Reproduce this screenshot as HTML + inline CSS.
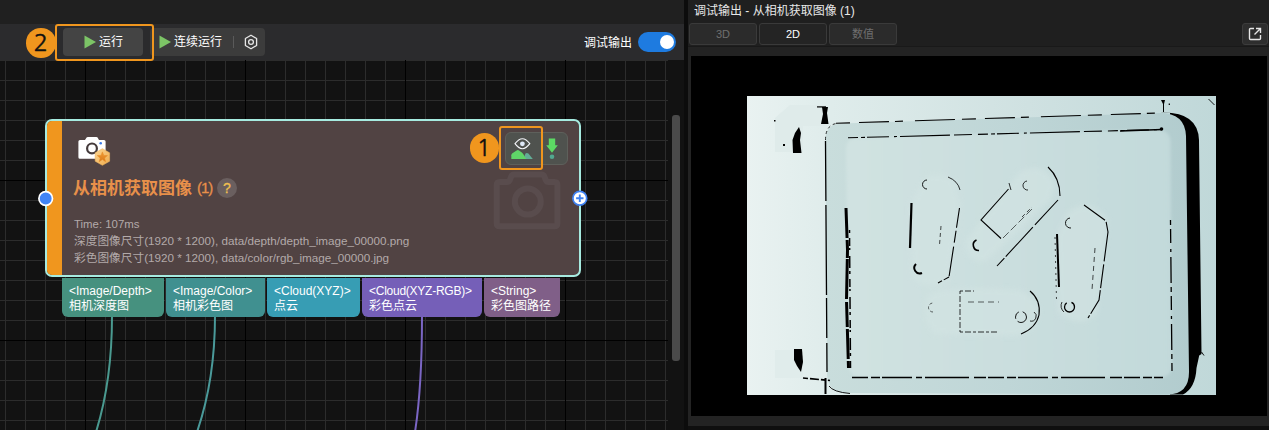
<!DOCTYPE html>
<html lang="zh-CN">
<head>
<meta charset="utf-8">
<title>调试输出</title>
<style>
*{box-sizing:border-box;margin:0;padding:0}
html,body{width:1269px;height:430px;overflow:hidden;background:#121212}
body{position:relative;font-family:"Liberation Sans","Noto Sans CJK SC",sans-serif;font-size:12px;color:#fff}
.abs{position:absolute}
#topstrip{left:0;top:0;width:684px;height:24px;background:#202020}
#toolbar{left:0;top:24px;width:684px;height:36px;background:#2b2b2d}
#canvas{left:0;top:60px;width:684px;height:370px;background:#121212;overflow:hidden}
#grid{left:0;top:0;width:668px;height:370px;
 background-image:
  linear-gradient(to right,#000 0,#000 1px,transparent 1px),
  linear-gradient(to bottom,#000 0,#000 1px,transparent 1px),
  linear-gradient(to right,#2c2c2c 0,#2c2c2c 1px,transparent 1px),
  linear-gradient(to bottom,#2c2c2c 0,#2c2c2c 1px,transparent 1px);
 background-size:160px 160px,160px 160px,20px 20px,20px 20px;
 background-position:85px 0,0 120px,5px 0,0 0;}
#vthumb{left:672px;top:55px;width:8px;height:246px;background:#4a4a4a;border-radius:3px}
#sep{left:684px;top:0;width:4px;height:430px;background:#0c0c0c}
#right{left:688px;top:0;width:581px;height:430px;background:linear-gradient(to bottom,#1f1f1f 0,#1f1f1f 46px,#191919 46px,#191919 47px,#232323 47px)}
#rbottom{left:688px;top:426px;width:581px;height:4px;background:#0f0f0f}
#view{left:691px;top:56px;width:576px;height:360px;background:#000}
.tab{top:23px;width:68px;height:22px;background:#2b2b2b;border:1px solid #3a3a3a;border-radius:3px;color:#6f6f6f;text-align:center;line-height:21px;font-size:11px}
.tab.on{background:#242424;color:#fff}
#title2{left:694px;top:3px;font-size:12px;line-height:17px;color:#e8e8e8;white-space:nowrap}
.btn{color:#fff;font-size:12px;white-space:nowrap}
#node{left:45px;top:119px;width:536px;height:158px;border:2px solid #a6ebe0;border-radius:7px;background:#514343;overflow:hidden}
#nodebar{left:0;top:0;width:15px;height:154px;background:#f0961e}
.port{top:278px;height:39px;border-radius:0 0 6px 6px;color:#fff;font-size:12px;line-height:15px;padding:5.5px 0 0 7px;white-space:nowrap}
.info{left:74px;color:#b3aaaa;font-size:11.7px;white-space:nowrap;line-height:14px}
.badge{width:29.5px;height:29.5px;border-radius:50%;background:#f0961e;color:#111;font-family:"NanumGothic",sans-serif;font-size:24px;-webkit-text-stroke:0.4px #111;line-height:29.5px;text-align:center}
.hl{border:2px solid #f0961e;border-radius:3px}
</style>
</head>
<body>
<div id="topstrip" class="abs"></div>
<div id="toolbar" class="abs"></div>
<div id="canvas" class="abs">
  <div id="grid" class="abs"></div>
  <div id="vthumb" class="abs"></div>
</div>

<!-- toolbar contents -->
<div class="abs" style="left:150px;top:28px;width:115px;height:28px;background:#3c3c3c;border-radius:4px"></div>
<div class="abs" style="left:63px;top:28px;width:80px;height:28px;background:#444444;border-radius:4px"></div>
<svg class="abs" style="left:83px;top:35px" width="14" height="14"><path d="M1.5 0.5 L13 7 L1.5 13.5 Z" fill="#7cc466"/></svg>
<div class="abs btn" style="left:99px;top:33px;line-height:18px">运行</div>
<svg class="abs" style="left:158px;top:35px" width="14" height="14"><path d="M1.5 0.5 L13 7 L1.5 13.5 Z" fill="#7cc466"/></svg>
<div class="abs btn" style="left:174px;top:33px;line-height:18px">连续运行</div>
<div class="abs" style="left:233px;top:36px;width:1px;height:12px;background:#5a5a5a"></div>
<svg class="abs" style="left:243px;top:34px" width="16" height="16" viewBox="0 0 16 16"><path d="M8 1.2 L13.6 4.5 V11.5 L8 14.8 L2.4 11.5 V4.5 Z" fill="none" stroke="#e6e6e6" stroke-width="1.3" stroke-linejoin="round"/><circle cx="8" cy="8" r="2.4" fill="none" stroke="#e6e6e6" stroke-width="1.3"/></svg>
<div class="abs hl" style="left:55px;top:24px;width:99px;height:37px"></div>
<div class="abs badge" style="left:26px;top:28px">2</div>

<div class="abs btn" style="left:584px;top:34px;line-height:18px;font-size:12px">调试输出</div>
<div class="abs" style="left:638px;top:32px;width:38px;height:20px;border-radius:10px;background:#1e7be0"></div>
<div class="abs" style="left:660px;top:35px;width:14px;height:14px;border-radius:50%;background:#fff"></div>

<!-- wires -->
<svg class="abs" style="left:0;top:300px" width="684" height="130" viewBox="0 300 684 130">
 <path d="M112 316 C112 360 106 400 96 432" fill="none" stroke="#4a9a90" stroke-width="2"/>
 <path d="M215 316 C215 360 208 400 197 432" fill="none" stroke="#4a9a9a" stroke-width="2"/>
 <path d="M422 316 C422 360 420 400 415 432" fill="none" stroke="#7b66c4" stroke-width="2"/>
</svg>

<!-- node -->
<div id="node" class="abs">
  <div id="nodebar" class="abs"></div>
</div>
<!-- watermark camera -->
<svg class="abs" style="left:490px;top:170px" width="76" height="64" viewBox="490 170 76 64">
 <path d="M499.700 182 H507 Q509 182 509.700 180.300 L511.300 176.300 Q512 174.600 514 174.600 H541.600 Q543.600 174.600 544.300 176.300 L545.900 180.300 Q546.600 182 548.600 182 H554.400 Q557.400 182 557.400 185 V223.200 Q557.400 226.200 554.400 226.200 H499.700 Q496.700 226.200 496.700 223.200 V185 Q496.700 182 499.700 182 Z" fill="none" stroke="#594c4d" stroke-width="6" stroke-linejoin="round"/>
 <circle cx="527.800" cy="201.600" r="13" fill="none" stroke="#594c4d" stroke-width="6"/>
</svg>
<!-- camera icon -->
<svg class="abs" style="left:76px;top:133px" width="38" height="36" viewBox="76 133 38 36">
 <defs><linearGradient id="hx" x1="0" y1="0" x2="1" y2="1"><stop offset="0" stop-color="#fcd692"/><stop offset="1" stop-color="#efaa4c"/></linearGradient>
 <linearGradient id="st" x1="0" y1="0" x2="0" y2="1"><stop offset="0" stop-color="#f09a34"/><stop offset="1" stop-color="#dc7a18"/></linearGradient></defs>
 <path d="M80 140 H85 L86.600 137.600 Q87 137 87.800 137 H96.400 Q97.200 137 97.600 137.600 L99 140 H104 Q105.600 140 105.600 141.600 V157.200 Q105.600 158.800 104 158.800 H80 Q78.400 158.800 78.400 157.200 V141.600 Q78.400 140 80 140 Z" fill="#fff"/>
 <circle cx="92" cy="148.400" r="4.900" fill="#fff" stroke="#453b3c" stroke-width="2.200"/>
 <circle cx="100.700" cy="143.300" r="1.300" fill="#3b7be8"/>
 <path d="M102.4 148.7 L109.6 152.8 L109.6 161.2 L102.4 165.3 L95.2 161.2 L95.2 152.8 Z" fill="url(#hx)" stroke="#eeb35c" stroke-width="0.600" stroke-linejoin="round"/>
 <path d="M102.4 151.9 L103.8 155.4 L107.5 155.6 L104.6 158.0 L105.6 161.7 L102.4 159.6 L99.2 161.7 L100.2 158.0 L97.3 155.6 L101.0 155.4 Z" fill="url(#st)" stroke="#e58a26" stroke-width="0.500" stroke-linejoin="round"/>
</svg>
<div class="abs" style="left:73px;top:177.5px;font-size:17px;font-weight:bold;color:#e8904a;line-height:22px;white-space:nowrap">从相机获取图像<span style="font-size:15px;margin-left:5px;font-weight:normal;letter-spacing:-1px;-webkit-text-stroke:0.3px #e8904a;position:relative;top:-0.5px">(1)</span></div>
<div class="abs" style="left:217px;top:178px;width:20px;height:20px;border-radius:50%;background:#6a5f5f;color:#f0c050;font-size:14px;-webkit-text-stroke:0.3px #f0c050;line-height:20px;text-align:center">?</div>
<div class="abs info" style="top:217px;font-size:11.4px">Time: 107ms</div>
<div class="abs info" style="top:234px">深度图像尺寸(1920 * 1200), data/depth/depth_image_00000.png</div>
<div class="abs info" style="top:251px">彩色图像尺寸(1920 * 1200), data/color/rgb_image_00000.jpg</div>

<!-- node icons -->
<div class="abs" style="left:505px;top:132px;width:63px;height:33px;border-radius:6px;background:#4f524e;border:1px solid #5e605b"></div>
<svg class="abs" style="left:508px;top:134px" width="28" height="28" viewBox="508 134 28 28">
 <path d="M523.5 159 L525.5 153.6 Q526.8 152.2 528.4 153.6 L532.8 159 Z" fill="#62ad96"/>
 <path d="M511.3 159 V155.2 Q511.3 154 512.4 153.2 L516.6 150.4 Q517.8 149.600 519 150.4 L521.8 152.4 Q522.6 153 523.2 154 L526.2 159 Z" fill="#5fd668"/>
 <path d="M515 143.7 Q522.4 133.700 529.8 143.7 Q522.4 153.700 515 143.7 Z" fill="none" stroke="#f4f6fa" stroke-width="1.1"/>
 <circle cx="522.4" cy="143.8" r="2.4" fill="#dfe9f8"/>
</svg>
<svg class="abs" style="left:542px;top:134px" width="20" height="28" viewBox="542 134 20 28">
 <path d="M548.8 138.600 H555.2 V145.300 H557.8 L552 152.800 L546.2 145.300 H548.8 Z" fill="#5cd964"/>
 <circle cx="552" cy="156.700" r="2.300" fill="#52a890"/>
</svg>
<div class="abs hl" style="left:499px;top:126px;width:44px;height:44px"></div>
<div class="abs badge" style="left:469.7px;top:133.2px;text-indent:-1.5px">1</div>

<!-- connectors -->
<svg class="abs" style="left:36px;top:189px" width="20" height="20" viewBox="36 189 20 20"><circle cx="45.700" cy="198.500" r="6.800" fill="#4084f6" stroke="#fff" stroke-width="1.700"/></svg>
<svg class="abs" style="left:570px;top:189px" width="20" height="20" viewBox="570 189 20 20"><circle cx="579.800" cy="198.300" r="6.900" fill="#fff" stroke="#3f82f2" stroke-width="1.700"/><path d="M579.800 194.600 V202 M576.100 198.300 H583.500" stroke="#3f82f2" stroke-width="1.900"/></svg>
<!-- ports -->
<div class="abs port" style="left:62px;width:102px;background:#46917f">&lt;Image/Depth&gt;<br>相机深度图</div>
<div class="abs port" style="left:166px;width:99px;background:#409090">&lt;Image/Color&gt;<br>相机彩色图</div>
<div class="abs port" style="left:267px;width:93px;background:#379db4">&lt;Cloud(XYZ)&gt;<br>点云</div>
<div class="abs port" style="left:362px;width:120px;background:#755fb8"><span style="letter-spacing:-0.25px">&lt;Cloud(XYZ-RGB)&gt;</span><br>彩色点云</div>
<div class="abs port" style="left:484px;width:76px;background:#805f88">&lt;String&gt;<br>彩色图路径</div>

<!-- right panel -->
<div id="sep" class="abs"></div>
<div id="right" class="abs"></div>
<div id="rbottom" class="abs"></div>
<div id="title2" class="abs">调试输出 - 从相机获取图像 (1)</div>
<div class="abs tab" style="left:689px">3D</div>
<div class="abs tab on" style="left:759px">2D</div>
<div class="abs tab" style="left:829px">数值</div>
<div class="abs" style="left:1242px;top:23px;width:26px;height:22px;background:#2e2e2e;border:1px solid #3c3c3c;border-radius:3px"></div>
<svg class="abs" style="left:1248px;top:27px" width="14" height="14" viewBox="0 0 14 14"><path d="M6 1.500 H2.500 Q1.500 1.500 1.500 2.500 V11.500 Q1.500 12.500 2.500 12.500 H11.500 Q12.500 12.500 12.500 11.500 V8" fill="none" stroke="#e6e6e6" stroke-width="1.400"/><path d="M8 1.500 H12.500 V6 M12.500 1.500 L6.500 7.500" fill="none" stroke="#e6e6e6" stroke-width="1.400"/></svg>
<div id="view" class="abs"></div>
<!--DEPTH-START-->
<svg class="abs" style="left:747px;top:96px" width="469" height="299" viewBox="747 96 469 299">
 <defs>
  <linearGradient id="bgG" x1="0" y1="0" x2="1" y2="0">
   <stop offset="0" stop-color="#e9f2f1"/><stop offset="0.18" stop-color="#dfeceb"/><stop offset="0.6" stop-color="#cfe1e1"/><stop offset="1" stop-color="#c0d8d9"/>
  </linearGradient>
  <linearGradient id="flG" x1="0" y1="0" x2="1" y2="0">
   <stop offset="0" stop-color="#d0e2e1"/><stop offset="0.5" stop-color="#cadede"/><stop offset="1" stop-color="#c2d9da"/>
  </linearGradient>
  <linearGradient id="rimG" x1="0" y1="0" x2="1" y2="0">
   <stop offset="0" stop-color="#c9dddc"/><stop offset="0.5" stop-color="#bfd6d7"/><stop offset="1" stop-color="#b2ccce"/>
  </linearGradient>
  <filter id="bl" x="-5%" y="-5%" width="110%" height="110%"><feGaussianBlur stdDeviation="1.6"/></filter>
  <filter id="bl2" x="-20%" y="-20%" width="140%" height="140%"><feGaussianBlur stdDeviation="2.5"/></filter>
 </defs>
 <rect x="747" y="96" width="469" height="299" fill="url(#bgG)"/>
 <!-- bracket lighter zones -->
 <path d="M775 118 L790 105 H826 V126 H803 V152 H775 Z" fill="#dfebea"/>
 <path d="M775 350 H803 V378 H775 Z" fill="#e0eceb"/>
 <!-- shadow right of tray -->
 <path d="M1160 112.500 Q1198 111 1199 140 L1201.500 354 L1199.200 355.500 L1196.500 368 Q1195.500 388 1183 394.500 L1170 394.500 L1170 113 Z" fill="#000"/>
 <path d="M1208.500 99 L1214.500 105" stroke="#000" stroke-width="0.900" fill="none"/>
 <path d="M1201.500 352 L1204 355.500" stroke="#000" stroke-width="0.900" fill="none"/>
 <!-- tray outer -->
 <path d="M841 123.500 L1160 113 Q1185 113 1186 136 L1189 372 Q1189 394 1168 394.500 L848 393 Q827.500 393 827 374 L825.500 140 Q825.500 124 841 123.500 Z" fill="url(#rimG)"/>
 <!-- tray floor -->
 <path filter="url(#bl)" d="M858 137.500 L1156 129.500 Q1170 129.500 1170.500 142 L1172 364 Q1172 377.500 1159 377.500 L862 377 Q849 377 848.500 364 L846 150 Q846 138 858 137.500 Z" fill="url(#flG)"/>
 <!-- part pads (slightly lighter) -->
 <g fill="#d3e4e3" filter="url(#bl2)" opacity="0.6">
  <path d="M926 177 Q941 170 955 182 L960 205 L949 280 Q930 292 912 278 L910 205 Z"/>
  <path d="M1020 172 Q1045 160 1055 185 L1050 200 L985 262 Q965 262 966 240 Z"/>
  <path d="M1068 212 Q1090 196 1108 220 L1097 314 Q1078 330 1058 312 L1057 234 Z"/>
  <path d="M928 295 Q950 285 1020 290 Q1040 300 1039 314 Q1035 332 1015 336 L935 334 Q920 320 928 295 Z"/>
 </g>
 <g fill="none" stroke="#000" stroke-linecap="butt">
  <!-- outer tray top edge (dashed) -->
  <path d="M836 123.300 L1160 113" stroke-width="1.100" stroke-dasharray="14 9 30 6 8 12 40 7"/>
  <path d="M825.500 140 Q825.500 124 838 123.400" stroke-width="0.800" stroke-dasharray="3 3"/>
  <!-- outer left edge -->
  <path d="M825.500 141 L827 372" stroke-width="1.300" stroke-dasharray="60 4 90 3 40 5"/>
  <!-- inner top rim -->
  <path d="M848 137.800 L1158 129.600" stroke-width="1.100" stroke-dasharray="10 3 4 2 22 5 3 3 50 4 18 6"/>
  <path d="M1120 131 L1162 129.500" stroke-width="1.600"/>
  <!-- inner left thick ragged -->
  <path d="M846 208 L847.500 250 L846.500 300 L848.500 368" stroke-width="3" stroke-dasharray="30 2 18 1 40 3 25 2"/>
  <path d="M849.500 230 L850.500 368" stroke-width="1.500" stroke-dasharray="3 5 8 2 2 6 12 3"/>
  <!-- inner bottom rim -->
  <path d="M852 377.500 L1163 377.500" stroke-width="1.600" stroke-dasharray="16 3 9 2 30 4 6 3 44 5 12 2"/>
  <!-- inner right rim -->
  <path d="M1170.500 220 L1172 371" stroke-width="1.300" stroke-dasharray="5 4 14 6 3 5 26 4"/>
  <!-- bottom-left extra -->
  <path d="M803 378 L830 380.500" stroke-width="1.600" stroke-dasharray="5 2 9 2"/>
  <path d="M825.500 378 V394" stroke-width="2"/>
  <path d="M829 386 Q833 392 850 393.500" stroke-width="0.900"/>
 </g>
 <!-- black blobs -->
 <g fill="#000">
  <path d="M822 107 H828 L827 113 L828.500 124 H821 L823 114 Z"/>
  <path d="M817 106.300 H826 V107.500 H817 Z"/>
  <path d="M799 127 L801 133 L800 140 L801.500 153 H793 L792.500 140 L795 133 Z"/>
  <rect x="783" y="144" width="2" height="2"/><rect x="774" y="120" width="1.500" height="1.500"/>
  <path d="M794 349 H802 L803 362 L801 372 L797 366 L794 360 Z"/>
  <path d="M1161 100 H1165 L1164 104 V112 H1163 V104 Z"/>
  <circle cx="1161.500" cy="129" r="1.800"/>
  <path d="M1168.700 103.500 h1.200 v1.500 h-1.200z"/>
 </g>
 <!-- parts outlines -->
 <g fill="none" stroke="#000" stroke-width="1.100">
  <!-- part 1 -->
  <path d="M911.500 203 L910 248" stroke-width="2.200"/>
  <path d="M959.500 208 L949 277" stroke-dasharray="20 3 12 4 30 3"/>
  <path d="M949 277 L938 283" stroke-dasharray="6 2"/>
  <path d="M948 177 Q958 181 960 190" stroke-width="0.800"/>
  <path d="M927 189 A4.500 4.500 0 0 1 927 180" stroke-width="0.900"/>
  <path d="M922 273 A5.500 5.500 0 0 1 916 264" stroke-width="2"/>
  <path d="M941 226 L939.500 245" stroke-width="0.700" stroke-dasharray="4 3"/>
  <!-- part 2 -->
  <path d="M1008.500 189 L981 220 L1001 238.500" />
  <path d="M1009 183 L1011 190" stroke-width="0.800"/>
  <path d="M1003 238 L1033 208" stroke-width="0.600" stroke-dasharray="8 3"/>
  <path d="M1058 200 L997 266" stroke-dasharray="34 3 40 2"/>
  <path d="M1048 167 Q1060 178 1060 196" />
  <path d="M1028 190 A4.500 4.500 0 0 1 1027 181" stroke-width="0.800"/>
  <path d="M979 250.500 A5.500 5.500 0 0 1 976.500 240" stroke-width="1.600"/>
  <path d="M1022 217 L1032 207" stroke-width="0.700" stroke-dasharray="4 3"/>
  <!-- part 3 -->
  <path d="M1057 234 L1059 287" stroke-width="2"/>
  <path d="M1055 237 L1056.500 300" stroke-width="0.700" stroke-dasharray="2 4"/>
  <path d="M1084 205 L1106 221 L1108 232 L1099 300 L1088 318" stroke-dasharray="26 2 40 3 24 2"/>
  <path d="M1071 228 A5 5 0 0 1 1070 218" stroke-width="0.900"/>
  <circle cx="1069.500" cy="307" r="5" stroke-width="1.300" stroke-dasharray="20 5"/>
  <path d="M1064 312 A8 8 0 0 1 1062 302" stroke-width="0.800"/>
  <path d="M1095 248 L1092 290" stroke-width="0.700" stroke-dasharray="5 4"/>
  <!-- part 4 -->
  <path d="M960 291 V332 M960 291 H974 M960 332 H999" stroke-width="0.800" stroke-dasharray="3 2 6 2"/>
  <path d="M968 302 H999" stroke-width="0.600" stroke-dasharray="6 4"/>
  <path d="M1030 291 Q1041 300 1039 315 Q1036 328 1021 334" />
  <circle cx="1021" cy="317" r="5.500" stroke-width="0.900" stroke-dasharray="12 3 8 4"/>
  <path d="M1034 312 A5 5 0 0 1 1030 321" stroke-width="0.800"/>
  <path d="M933 312 A4.500 4.500 0 0 1 933 303" stroke-width="0.600" stroke-dasharray="3 2"/>
 </g>
</svg>
<!--DEPTH-END-->
</body>
</html>
